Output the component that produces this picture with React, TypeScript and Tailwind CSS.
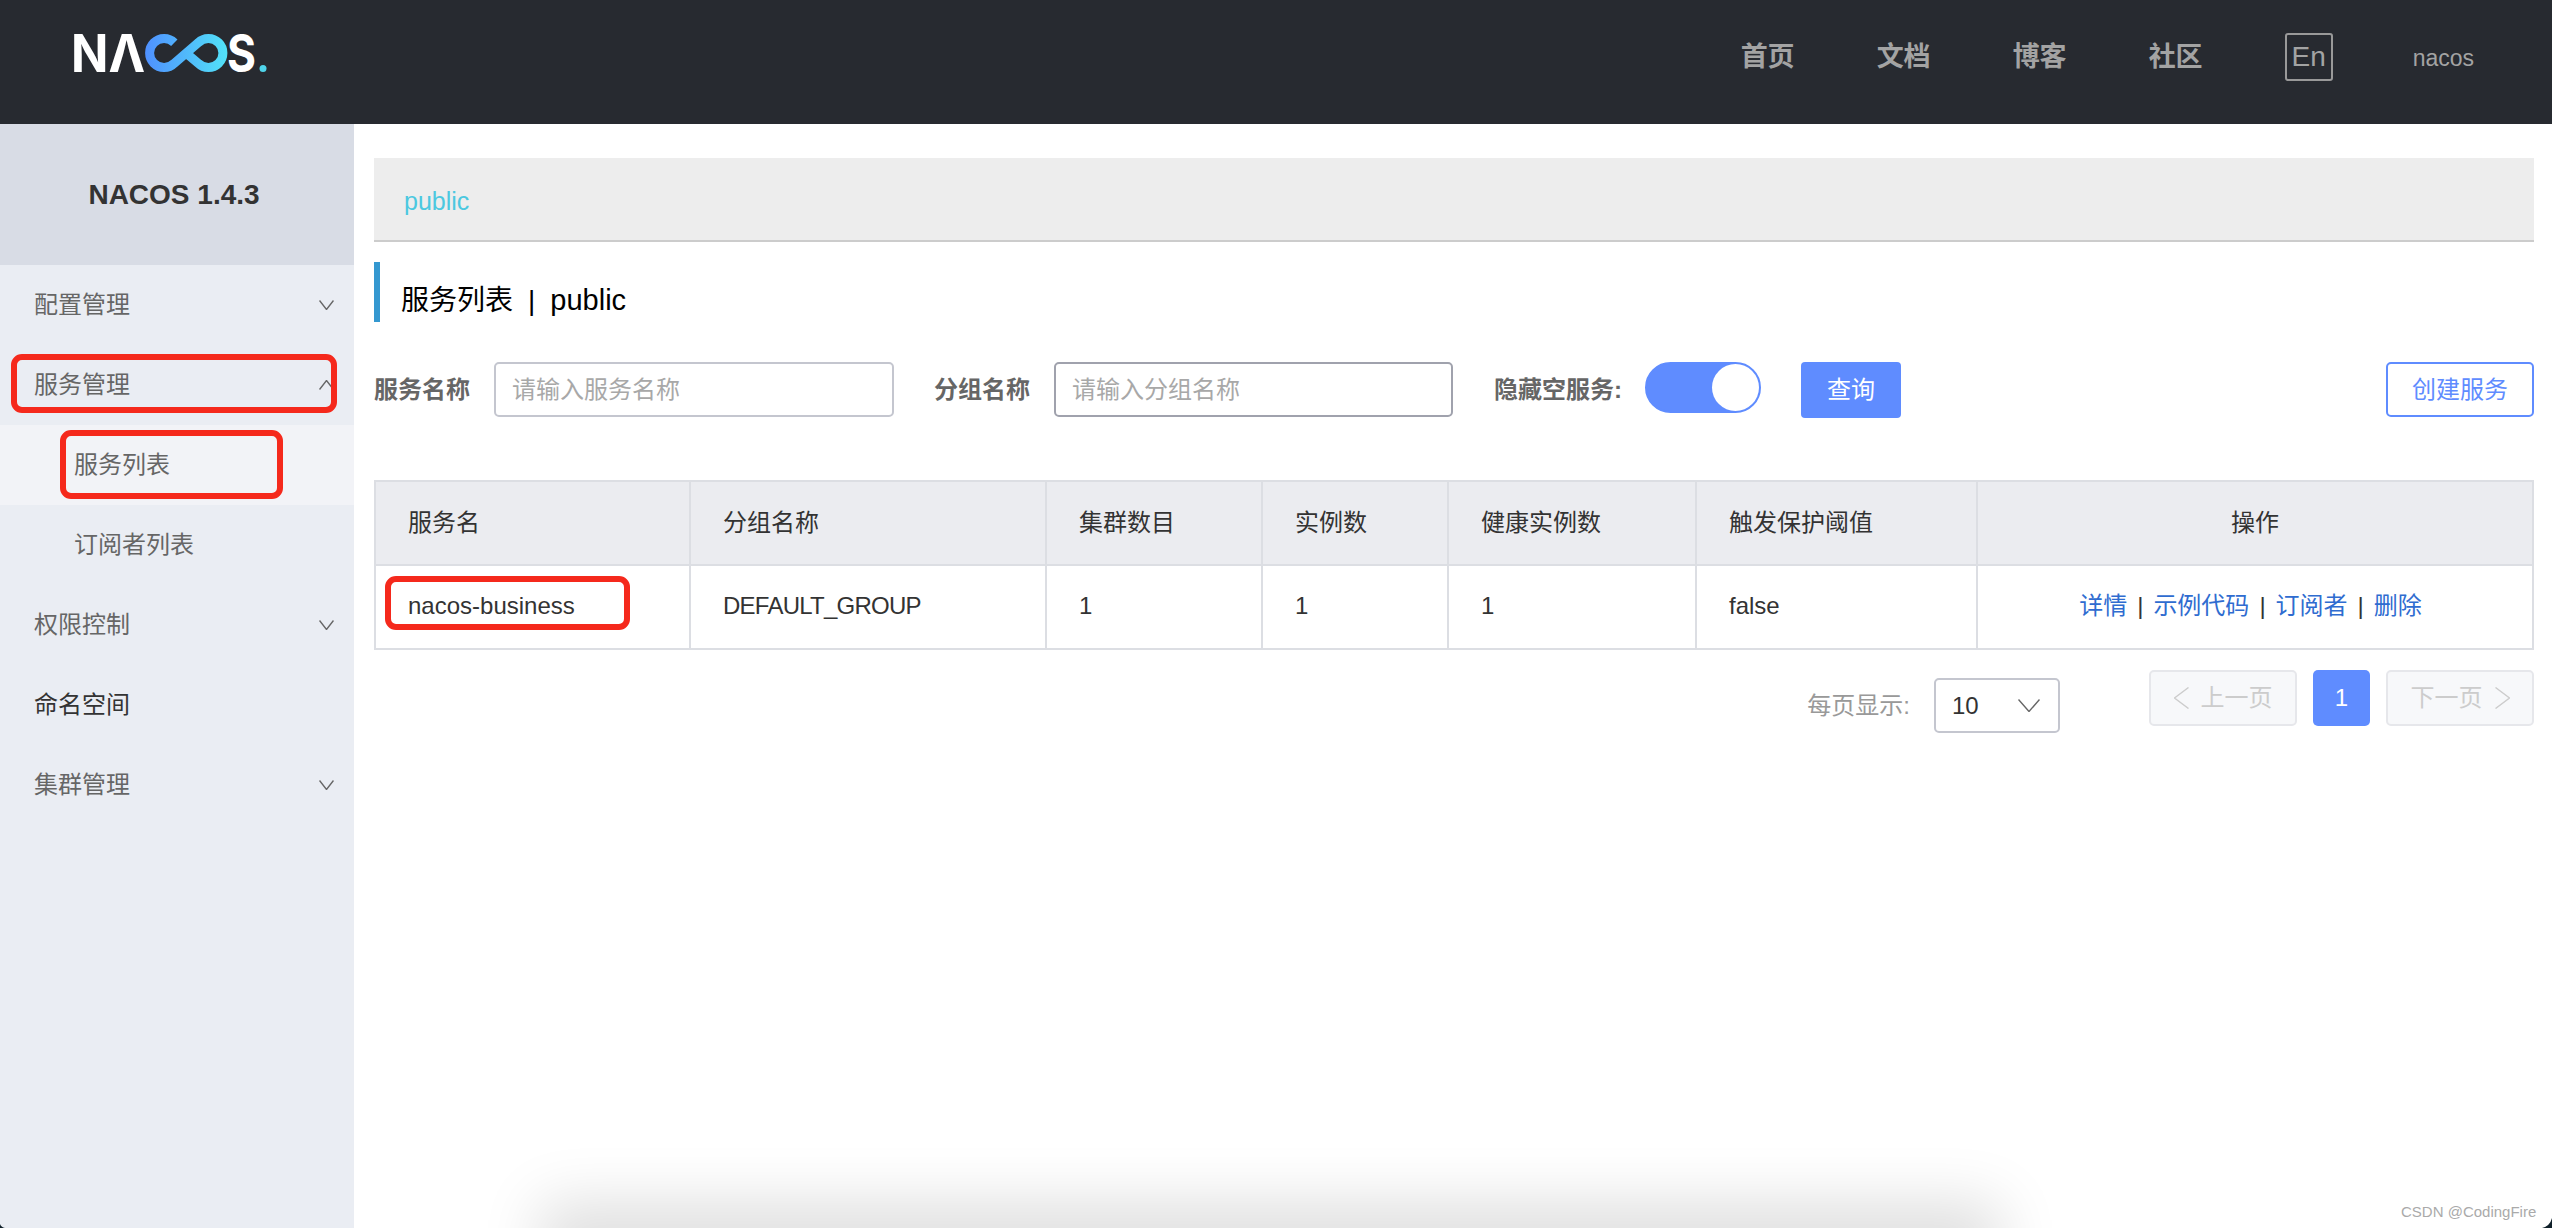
const navLinks = ['首页', '文档', '博客', '社区'];
const columns = [
  { title: '服务名', width: 'w-[315px]' },
  { title: '分组名称', width: 'w-[356px]' },
  { title: '集群数目', width: 'w-[216px]' },
  { title: '实例数', width: 'w-[186px]' },
  { title: '健康实例数', width: 'w-[248px]' },
  { title: '触发保护阈值', width: 'w-[281px]' },
];
const rowCells = ['nacos-business', 'DEFAULT_GROUP', '1', '1', '1', 'false'];
const actions = ['详情', '示例代码', '订阅者', '删除'];

function NacosLogo() {
  return (
    <svg width="194" height="38" viewBox="0 0 194 38" className="shrink-0 overflow-visible">
      <defs>
        <linearGradient id="loop" x1="70" y1="0" x2="156" y2="0" gradientUnits="userSpaceOnUse">
          <stop offset="0" stopColor="#4f8eff" />
          <stop offset="1" stopColor="#52e4f8" />
        </linearGradient>
      </defs>
      <text x="-2" y="38" fontFamily="Inter" fontWeight="700" fontSize="52" fill="#fff" textLength="74" lengthAdjust="spacingAndGlyphs">
        NΛ
      </text>
      <path
        d="M101.300 8.700A14.500 14.500 0 1 0 101.300 29.300L125.200 8.700A14.500 14.500 0 1 1 125.200 29.300L113 19"
        fill="none"
        stroke="url(#loop)"
        strokeWidth="9"
      />
      <text x="154" y="38" fontFamily="Inter" fontWeight="700" fontSize="52" fill="#fff" textLength="29" lengthAdjust="spacingAndGlyphs">
        S
      </text>
      <circle cx="190" cy="34.500" r="3.500" fill="#4fd4ea" />
    </svg>
  );
}

function Vee({ width, height, dir = 'down', className }: { width: number; height: number; dir?: 'down' | 'up' | 'left' | 'right'; className?: string }) {
  const points = {
    down: `0.5,0.5 ${width / 2},${height - 0.5} ${width - 0.5},0.5`,
    up: `0.5,${height - 0.5} ${width / 2},0.5 ${width - 0.5},${height - 0.5}`,
    left: `${width - 0.5},0.5 0.5,${height / 2} ${width - 0.5},${height - 0.5}`,
    right: `0.5,0.5 ${width - 0.5},${height / 2} 0.5,${height - 0.5}`,
  }[dir];
  return (
    <svg width={width} height={height} className={`shrink-0 ${className ?? ''}`}>
      <polyline points={points} fill="none" stroke="currentColor" strokeWidth="1.4" />
    </svg>
  );
}

function SideItem({ label, open, strong }: { label: string; open?: boolean; strong?: boolean }) {
  return (
    <div className={`flex h-20 items-center justify-between pl-[34px] pr-5 text-[24px] ${strong ? 'text-[#333]' : 'text-[#666]'}`}>
      <span>{label}</span>
      {strong ? null : <Vee width={15} height={10} dir={open ? 'up' : 'down'} className="text-[#666]" />}
    </div>
  );
}

function Sidebar() {
  return (
    <aside className="w-[354px] shrink-0 bg-[#eaedf3]">
      <div className="flex h-[141px] items-center justify-center bg-[#d8dce5] pr-[6px] text-[28px] font-bold text-[#333]">NACOS 1.4.3</div>
      <SideItem label="配置管理" />
      <SideItem label="服务管理" open />
      <div className="flex h-20 items-center bg-[#f2f3f7] pl-[74px] text-[24px] text-[#666]">服务列表</div>
      <div className="flex h-20 items-center pl-[74px] text-[24px] text-[#666]">订阅者列表</div>
      <SideItem label="权限控制" />
      <SideItem label="命名空间" strong />
      <SideItem label="集群管理" />
    </aside>
  );
}

function FilterBar() {
  return (
    <div className="mt-10 flex items-start text-[24px]">
      <span className="flex h-[55px] w-[120px] items-center font-bold text-[#666]">服务名称</span>
      <div className="flex h-[55px] w-[400px] items-center rounded-[5px] border-2 border-[#c4c6cf] pl-4 text-[#a8a8a8]">请输入服务名称</div>
      <span className="ml-10 flex h-[55px] w-[120px] items-center font-bold text-[#666]">分组名称</span>
      <div className="flex h-[55px] w-[399px] items-center rounded-[5px] border-2 border-[#a0a2ad] pl-4 text-[#a8a8a8]">请输入分组名称</div>
      <span className="ml-[41px] flex h-[55px] w-[151px] items-center font-bold text-[#666]">隐藏空服务:</span>
      <div className="flex h-[51px] w-[116px] items-center justify-end rounded-full border-2 border-[#5f8cff] bg-[#5f8cff]">
        <span className="h-[47px] w-[47px] rounded-full bg-white" />
      </div>
      <button className="ml-10 h-[56px] w-[100px] rounded-[4px] bg-[#5f8cff] text-white">查询</button>
      <button className="ml-auto h-[55px] w-[148px] rounded-[5px] border-2 border-[#5f8cff] text-[#5f8cff]">创建服务</button>
    </div>
  );
}

function ServiceTable() {
  return (
    <table className="mt-[62px] w-[2160px] table-fixed border-collapse text-left text-[24px] text-[#333]">
      <thead>
        <tr className="h-[84px] bg-[#ebecf0]">
          {columns.map((col) => (
            <th key={col.title} className={`${col.width} border-2 border-[#dcdee3] pl-8 font-normal`}>
              {col.title}
            </th>
          ))}
          <th className="border-2 border-[#dcdee3] text-center font-normal">操作</th>
        </tr>
      </thead>
      <tbody>
        <tr className="h-[84px]">
          {rowCells.map((cell, i) => (
            <td key={i} className={`border-2 border-[#dcdee3] pb-[2px] pl-8 ${cell === 'DEFAULT_GROUP' ? 'tracking-[-0.75px]' : ''}`}>
              {cell}
            </td>
          ))}
          <td className="border-2 border-[#dcdee3] pb-[2px] pr-[9px] text-center">
            {actions.map((action, i) => (
              <span key={action}>
                {i > 0 ? <span className="mx-[10px]">|</span> : null}
                <a className="text-[#2f6cd0]">{action}</a>
              </span>
            ))}
          </td>
        </tr>
      </tbody>
    </table>
  );
}

function Pager() {
  return (
    <div className="mt-5 flex items-start justify-end text-[24px]">
      <span className="mt-2 flex h-[55px] items-center text-[#999]">每页显示:</span>
      <div className="ml-6 mt-2 flex h-[55px] w-[126px] items-center justify-between rounded-[5px] border-2 border-[#c4c6cf] pl-4 pr-[18px] text-[#333]">
        <span>10</span>
        <Vee width={22} height={13} className="text-[#666]" />
      </div>
      <button className="ml-[89px] flex h-[56px] w-[148px] items-center justify-center gap-3 rounded-[5px] border-2 border-[#e6e7eb] bg-[#f7f8fa] text-[#ccc]">
        <Vee width={15} height={22} dir="left" />
        上一页
      </button>
      <button className="ml-4 h-[56px] w-[57px] rounded-[5px] bg-[#5f8cff] text-white">1</button>
      <button className="ml-4 flex h-[56px] w-[148px] items-center justify-center gap-3 rounded-[5px] border-2 border-[#e6e7eb] bg-[#f7f8fa] text-[#ccc]">
        下一页
        <Vee width={15} height={22} dir="right" />
      </button>
    </div>
  );
}

export default function App() {
  return (
    <div className="relative flex h-[1228px] w-[2552px] flex-col overflow-hidden bg-white [font-family:'Liberation_Sans','Noto_Sans_CJK_SC',sans-serif]">
      <header className="flex h-[124px] shrink-0 items-center bg-[#272a30] pl-[73px] text-[#a3a3a3]">
        <div className="-mt-[18px]">
          <NacosLogo />
        </div>
        <nav className="ml-auto -mt-[10px] flex items-center">
          <div className="flex gap-[82px] text-[27px] font-bold">
            {navLinks.map((link) => (
              <span key={link}>{link}</span>
            ))}
          </div>
          <div className="ml-[82px] flex h-12 w-12 items-center justify-center rounded-[3px] border-2 border-[#999] text-[28px]">En</div>
          <span className="ml-20 mr-[78px] mt-[2px] text-[23px]">nacos</span>
        </nav>
      </header>

      <div className="flex flex-1">
        <Sidebar />
        <main className="flex-1 pl-5 pr-[18px] pt-[34px]">
          <div className="flex h-[84px] items-center border-b-2 border-[#ccc] bg-[#ededed] pl-[30px] pt-[6px] text-[25px] text-[#4cc8e0]">public</div>
          <div className="mt-5 flex h-[60px] items-center border-l-[6px] border-[#3498d0] pl-[21px] pt-[18px] text-[28px] text-black">
            服务列表<span className="mx-[15px]">|</span>
            <span className="text-[29px]">public</span>
          </div>
          <FilterBar />
          <ServiceTable />
          <Pager />
        </main>
      </div>

      {/* red annotation boxes drawn over the screenshot */}
      <div className="absolute left-[11px] top-[354px] h-[59px] w-[326px] rounded-[11px] border-[6px] border-[#f5291c]" />
      <div className="absolute left-[60px] top-[430px] h-[69px] w-[223px] rounded-[11px] border-[6px] border-[#f5291c]" />
      <div className="absolute left-[385px] top-[576px] h-[54px] w-[245px] rounded-[11px] border-[6px] border-[#f5291c]" />

      <div className="absolute -bottom-[24px] left-[570px] h-5 w-[1400px] bg-[#d8d8d8] shadow-[0_0_60px_30px_rgba(0,0,0,0.13)]" />
      <span className="absolute left-[2401px] top-[1201px] text-[15px] text-[#aaa]">CSDN @CodingFire</span>

      {/* window corners of the original capture */}
      <svg width="10" height="10" className="absolute bottom-0 right-0">
        <path d="M10 0V10H0Q8 8 10 0Z" fill="#10202a" />
      </svg>
      <svg width="5" height="4" className="absolute bottom-0 left-0">
        <path d="M0 0V4H5Q1 3 0 0Z" fill="#10202a" />
      </svg>
    </div>
  );
}
